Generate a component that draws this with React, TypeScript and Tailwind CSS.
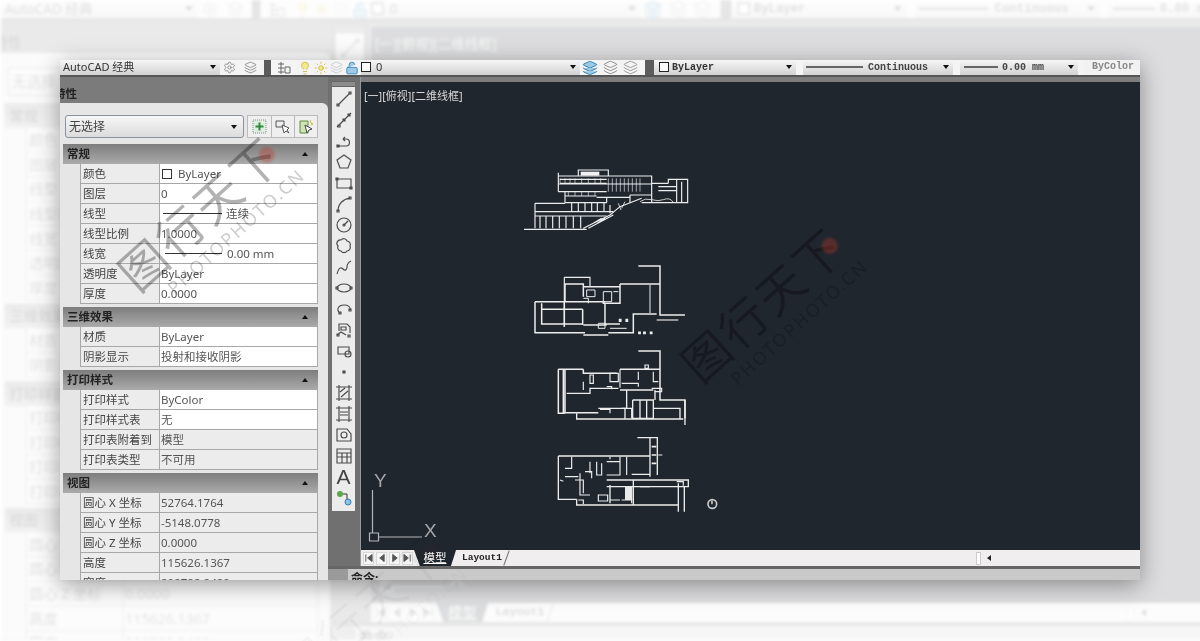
import React from "react";
import { Settings, Lightbulb, Sun, LockOpen, Layers } from "lucide-react";

const CJK = "font-['Noto_Sans','Noto_Sans_CJK_SC',sans-serif]";
const MONO = "font-['Liberation_Mono','Noto_Sans_CJK_SC',monospace]";

type Row = { label: string; value: string; line?: number; swatch?: boolean; gray?: boolean };
type Section = { title: string; rows: Row[] };

const sections: Section[] = [
  {
    title: "常规",
    rows: [
      { label: "颜色", value: "ByLayer", swatch: true },
      { label: "图层", value: "0" },
      { label: "线型", value: "连续", line: 59 },
      { label: "线型比例", value: "1.0000" },
      { label: "线宽", value: "0.00 mm", line: 57 },
      { label: "透明度", value: "ByLayer" },
      { label: "厚度", value: "0.0000" },
    ],
  },
  {
    title: "三维效果",
    rows: [
      { label: "材质", value: "ByLayer" },
      { label: "阴影显示", value: "投射和接收阴影" },
    ],
  },
  {
    title: "打印样式",
    rows: [
      { label: "打印样式", value: "ByColor" },
      { label: "打印样式表", value: "无" },
      { label: "打印表附着到", value: "模型", gray: true },
      { label: "打印表类型", value: "不可用", gray: true },
    ],
  },
  {
    title: "视图",
    rows: [
      { label: "圆心 X 坐标", value: "52764.1764", gray: true },
      { label: "圆心 Y 坐标", value: "-5148.0778", gray: true },
      { label: "圆心 Z 坐标", value: "0.0000", gray: true },
      { label: "高度", value: "115626.1367", gray: true },
      { label: "宽度", value: "202782.2429", gray: true },
    ],
  },
];

// left draw palette, one path per tool
const tools: React.ReactNode[] = [
  <path d="M3 15L15 3M2 14h2v2H2zM14 2h2v2h-2z" />,
  <path d="M2 16L16 2M3 14h2v2H3zM8 8h2v2H8zM13 3h2v2h-2z" />,
  <path d="M2 14h9a3.500 3.500 0 000-7H8M8 7l2-2M8 7l2 2M2 13h2v2H2z" />,
  <path d="M9 2l7 5-3 8H5L2 7z" />,
  <path d="M2 5h14v9H2zM1 4h2v2H1zM15 13h2v2h-2z" />,
  <path d="M3 16C3 9 8 4 15 3M2 15h2v2H2zM14 2h2v2h-2z" />,
  <><circle cx="9" cy="9" r="7" /><path d="M9 9l4-4" /><circle cx="9" cy="9" r="1" /></>,
  <path d="M6 3a3.500 3.500 0 016 1 3.500 3.500 0 013 5 3.500 3.500 0 01-3 5 3.500 3.500 0 01-6 0 3.500 3.500 0 01-3-5 3.500 3.500 0 013-6z" />,
  <path d="M2 16c2-7 4-7 6-5s4 1 4-2 2-5 4-6" />,
  <><ellipse cx="9" cy="9" rx="7" ry="4" /><path d="M1 8h2v2H1zM15 8h2v2h-2z" /></>,
  <path d="M5 13C1 10 3 5 9 5c4 0 7 2 6 5M4 12h2v2H4zM14 9h2v2h-2z" />,
  <path d="M4 10V3h8l3 3v6M2 14l4-3 5 3M2 13h2v2H2zM13 14h2v2h-2zM6 6h5v3H6z" />,
  <><path d="M3 5h11v7H3z" /><circle cx="13" cy="12" r="3" /></>,
  <path d="M8 8h2v2H8z" fill="#4a4a4a" />,
  <path d="M4 3h10v12H4zM1 3h16M1 15h16M4 1v16M14 1v16M5 8l5-4M6 13l7-6" />,
  <path d="M4 3h10v12H4zM1 3h16M1 15h16M4 1v16M14 1v16M5 7h8M5 10h8" />,
  <><path d="M2 3h10l4 5v7H2z" /><circle cx="9" cy="9" r="3" /></>,
  <path d="M2 2h14v14H2zM2 6h14M2 10h14M7 6v10M12 6v10" />,
];

const navButtons = ["M2 1v8M9 1L4 5l5 4z", "M8 1L3 5l5 4z", "M3 1l5 4-5 4z", "M8 1v8M1 1l5 4-5 4z"];

function GrayIcon({ children }: { children: React.ReactNode }) {
  return (
    <svg width="18" height="18" viewBox="0 0 18 18" fill="none" stroke="#4a4a4a" strokeWidth="1.150">
      {children}
    </svg>
  );
}

function Arrow() {
  return <span className="w-0 h-0 border-x-[3.5px] border-x-transparent border-t-[4px] border-t-[#111]" />;
}

function Combo({ className, children }: { className: string; children: React.ReactNode }) {
  return (
    <div className={`flex items-center h-full pb-[1px] bg-linear-to-b from-[#f6f6f6] to-[#d2d2d2] pr-[4px] ${className}`}>
      {children}
      <span className="ml-auto flex">
        <Arrow />
      </span>
    </div>
  );
}

function Toolbar() {
  return (
    <div className="flex h-[15px] bg-[#f4f4f4] shrink-0">
      <Combo className={`w-[160px] pl-[3px] text-[11px] text-[#333] ${CJK}`}>AutoCAD 经典</Combo>
      <div className="flex items-center w-[44px] pl-[3px] gap-[8px]">
        <Settings size={13} strokeWidth={1.2} color="#666" />
        <Layers size={13} strokeWidth={1.2} color="#666" />
      </div>
      <div className="w-[7px] bg-[#5c5c5c]" />
      <div className="flex items-center w-[26px] justify-center">
        <svg width="14" height="14" viewBox="0 0 14 14" fill="none" stroke="#666">
          <path d="M1 3h6M1 7h6M1 11h6M4 1v12M8 6h5v6H8z" />
        </svg>
      </div>
      <div className="flex items-center w-[64px] gap-[2px] pl-[1px]">
        <Lightbulb size={14} strokeWidth={1.3} color="#c9b52a" fill="#f3e98e" />
        <Sun size={14} strokeWidth={1.4} color="#c9b52a" fill="#f3e98e" />
        <Layers size={13} strokeWidth={1.2} color="#bbb" />
        <LockOpen size={14} strokeWidth={1.4} color="#2f7fb5" fill="#9cc9e4" />
      </div>
      <Combo className={`w-[219px] text-[11px] text-[#333] ${CJK}`}>
        <span className="w-[10px] h-[10px] border border-[#222] bg-white mr-[5px]" />0
      </Combo>
      <div className="flex items-center w-[65px] pl-[2px] gap-[5px]">
        <Layers size={16} strokeWidth={1.4} color="#2f7fb5" fill="#9cc9e4" />
        <Layers size={15} strokeWidth={1.1} color="#666" />
        <Layers size={15} strokeWidth={1.1} color="#777" />
      </div>
      <div className="w-[9px] bg-[#5c5c5c]" />
      <Combo className={`w-[142px] pl-[5px] text-[10px] font-bold text-[#333] ${MONO}`}>
        <span className="w-[10px] h-[10px] border border-[#222] bg-white mr-[3px]" />
        ByLayer
      </Combo>
      <div className="w-[7px]" />
      <Combo className={`w-[150px] pl-[3px] text-[10px] font-bold text-[#444] ${MONO}`}>
        <span className="w-[57px] h-[1.5px] bg-[#666] mr-[5px]" />
        Continuous
      </Combo>
      <div className="w-[7px]" />
      <Combo className={`w-[118px] pl-[4px] text-[10px] font-bold text-[#444] ${MONO}`}>
        <span className="w-[34px] h-[1.5px] bg-[#666] mr-[4px]" />
        0.00 mm
      </Combo>
      <div className="w-[6px]" />
      <div className={`flex-1 pl-[8px] bg-[#f2f2f2] text-[10px] leading-[13px] font-bold text-[#888] ${MONO}`}>ByColor</div>
    </div>
  );
}

function PropRow({ row }: { row: Row }) {
  return (
    <div className={`flex h-[20px] ml-[17px] text-[11.5px] leading-[19px] border-b border-[#a8a8a8] ${CJK}`}>
      <div className="w-[80px] pl-[2px] bg-[#ececec] border-x border-[#a8a8a8] text-[#444] whitespace-nowrap overflow-hidden">
        {row.label}
      </div>
      <div
        className={`flex flex-1 items-center pl-[1px] border-r border-[#a8a8a8] text-[#555] whitespace-nowrap ${
          row.gray ? "bg-[#ececec]" : "bg-white"
        }`}
      >
        {row.swatch && <span className="w-[10px] h-[10px] border border-[#333] ml-[1px] mr-[6px]" />}
        {row.line === 59 && <span className="w-[59px] h-px bg-[#333] ml-[2px] mr-[4px]" />}
        {row.line === 57 && <span className="w-[57px] h-px bg-[#333] ml-[4px] mr-[5px]" />}
        {row.value}
      </div>
    </div>
  );
}

function PropsPanel() {
  return (
    <div className="w-[268px] h-full flex flex-col shrink-0 bg-[#7b7b7b] overflow-hidden">
      <div className={`h-[26px] shrink-0 -ml-[6px] text-[11.5px] leading-[33px] text-[#222] font-bold ${CJK}`}>特性</div>
      <div className="flex-1 bg-[#e6e6e6] rounded-tr-[6px] pl-[3px] pr-[10px] pt-[12px]">
        <div className="flex gap-[3px] h-[23px] pl-[2px]">
          <div
            className={`flex items-center w-[180px] pl-[3px] pr-[6px] border border-[#8a93a0] rounded-[3px] bg-linear-to-b from-[#f7f7f7] to-[#dcdcdc] text-[12px] text-[#444] ${CJK}`}
          >
            无选择
            <span className="ml-auto flex">
              <Arrow />
            </span>
          </div>
          <div className="flex w-[71px] border border-[#bbb] bg-[#efefef] divide-x divide-[#bbb]">
            <span className="flex-1 flex items-center justify-center">
              <svg width="15" height="15" viewBox="0 0 15 15">
                <rect x="1" y="1" width="13" height="13" fill="#dfeee0" stroke="#8a8a8a" strokeDasharray="1 1" />
                <path d="M7.500 3.500v8M3.500 7.500h8" stroke="#2e8b3c" strokeWidth="2" />
              </svg>
            </span>
            <span className="flex-1 flex items-center justify-center">
              <svg width="16" height="16" viewBox="0 0 16 16" fill="none" stroke="#555">
                <path d="M1 2h8v6H1z" />
                <path d="M7 6l2 8 2-2 3 2-2-3 2-2z" fill="#fff" />
              </svg>
            </span>
            <span className="flex-1 flex items-center justify-center">
              <svg width="16" height="16" viewBox="0 0 16 16" fill="none">
                <path d="M2 2h8v12H2z" fill="#cfe3b4" stroke="#5c8a3a" />
                <path d="M7 6l2 8 2-3 3-1z" fill="#fff" stroke="#444" />
                <path d="M12 1l1 3 2 1-2 1" stroke="#d9b62a" />
              </svg>
            </span>
          </div>
        </div>
        <div className="flex flex-col gap-[3px] mt-[6px]">
          {sections.map((s) => (
            <div key={s.title}>
              <div
                className={`flex items-center h-[20px] pl-[4px] pr-[10px] bg-linear-to-b from-[#7d7d7d] to-[#ababab] text-[11.5px] font-bold text-[#222] ${CJK}`}
              >
                {s.title}
                <span className="ml-auto w-0 h-0 border-x-[3.5px] border-x-transparent border-b-[4px] border-b-[#111]" />
              </div>
              {s.rows.map((r) => (
                <PropRow key={r.label} row={r} />
              ))}
            </div>
          ))}
        </div>
      </div>
    </div>
  );
}

function Palette() {
  return (
    <div className="w-[23px] shrink-0 flex flex-col ml-[4px]">
      <div className="h-[6px] mt-[4px] bg-[#8d8d8d] border-y border-[#666]" />
      <div className="flex flex-col items-center bg-[#ececec] pt-[1px] pb-[3px]">
        {tools.map((t, i) => (
          <div key={i} className="h-[21px] flex items-center justify-center">
            <GrayIcon>{t}</GrayIcon>
          </div>
        ))}
        <div className="h-[22px] text-[21px] leading-[22px] text-[#444] font-['Liberation_Sans',sans-serif]">A</div>
        <svg width="18" height="20" viewBox="0 0 18 20">
          <circle cx="5" cy="6" r="3" fill="#5aa64a" />
          <circle cx="13" cy="14" r="3" fill="#8fc0e6" stroke="#2f7fb5" />
          <path d="M8 6h4v5" fill="none" stroke="#333" />
        </svg>
      </div>
    </div>
  );
}

function Drawing() {
  const bandGrid = [295, 307, 319, 331, 343, 355, 367, 379, 390];
  const cols = [90, 108, 128, 148, 168, 190, 212];
  const mids = [185, 205, 225, 245, 262, 282];
  return (
    <svg className="absolute inset-0" width="779" height="468" viewBox="361 82 779 468" fill="none" stroke="#eceded">
      <g transform="translate(510 160) scale(0.3333)" strokeWidth="3.500">
        {/* elevation */}
        <rect x="212" y="35" width="56" height="12" fill="#f2f2f2" stroke="none" />
        <path d="M145 38V95M145 48H425V128M205 48V30H295V48M150 58H290M150 70H290M145 72H425M145 95H290M165 95V128M165 108H260M165 128H290" />
        <path d="M260 112H360M290 112V128M75 130H165M75 130V205M75 155H310M75 168H290M300 135V160" />
        <path d="M220 205L300 165L330 140L395 115M235 205L310 165M42 208H230M250 190L275 175M262 190L285 175" />
        <path d="M360 105H425M360 105V128M445 80H500M445 92H500M500 60V128M515 65V128M475 70V58H533V128H395M425 70H475" />
        <path d="M390 125q15-12 35-6t35 0q20-8 30 8M325 130l8 20M345 125l-10 20" strokeWidth="2.500" />
        {bandGrid.map((x) => (
          <path key={x} d={`M${x} 55V95`} strokeWidth="2" />
        ))}
        {cols.map((x) => (
          <path key={x} d={`M${x} 168V205`} />
        ))}
        {mids.map((x) => (
          <path key={x} d={`M${x} 128V155`} />
        ))}
        <path d="M150 55v14M165 55v14M180 55v14M195 55v14M215 55v14M235 55v14M255 55v14M272 55v14M175 96v12M195 96v12M215 96v12M235 96v12M255 96v12" strokeWidth="2" />

        {/* plan 1 */}
        <path d="M385 318H450V465H525" strokeWidth="4.500" />
        <path d="M163 352H240V378M163 352V500" />
        <path d="M165 372H220V410M165 372V425M75 425H285M75 425V518H225M95 430V492H220M95 448H218M218 448V495M163 425V500" strokeWidth="4.500" />
        <path d="M330 372H450M330 372V430H280V425M220 380H330M285 430V492H330M220 495H290M220 525H295M295 518H370V462H440" strokeWidth="4.500" />
        <path d="M420 372V460M440 480H505" stroke="#b9bbbc" strokeWidth="4" />
        <path d="M230 390h25v20h-25zM280 395h25v30h-25zM310 395h15M220 415h15v15M265 490h20v15h-20zM300 505h50" strokeWidth="3" />
        <path d="M328 478h5v6h-5zM348 478h5v6h-5zM386 516h5v5h-5zM401 516h5v5h-5zM421 516h5v5h-5z" fill="#e9eaea" />
      </g>
      <g transform="translate(510 340) scale(0.3333)" strokeWidth="3.500">
        {/* plan 2 */}
        <path d="M385 33H450V180H525V235M145 88V220H165M160 88V218M145 88H220M165 88V218H265M220 88V100H320M330 88H450" strokeWidth="4.500" />
        <path d="M170 160H240V145H325M330 150H430M350 150V205H265M200 220V237H520M345 205V235M368 180V235H430V180H368M390 180V235M410 180V235M430 205H510V237M525 180V255M435 150V180" strokeWidth="4" />
        <path d="M240 105v25h10v-25zM300 100h25v25h-25zM330 88v55M405 75h10v10h-10zM385 95v25M430 95v30h15M220 125v25M335 130h50v10M425 145h30v10h-20M270 208h30v12M335 205h30v30M290 140h15v8" strokeWidth="3.500" />

        {/* plan 3 */}
        <path d="M382 293H442V405M420 295V410M145 348H420M145 348V478H200M200 478V495H505M505 430V515M523 440V515M290 420H535V440H290M370 420V495M300 435V490M365 403H420" strokeWidth="4" />
        <rect x="345" y="440" width="22" height="40" fill="#e9eaea" stroke="none" />
        <path d="M210 400V465H240M240 365v35M260 365v40h15v-35M185 350v35h-20M165 410h40M195 420h25v40M290 365h40v40h-40M330 350v55M350 350v55M300 480h30M335 480h30v10M265 465h28v18h-28zM205 480h15v12M150 420l10 4M225 395h20v20M300 350v8M445 345h12M500 425h20v12M390 440h30" strokeWidth="3.500" />
        <path d="M425 320h14M425 345h14M425 370h14" strokeWidth="5" />
        <circle cx="607" cy="492" r="13" stroke="#c8cacb" strokeWidth="5" />
        <path d="M606 482v11" stroke="#e9eaea" strokeWidth="4" />
      </g>
      {/* ucs icon */}
      <g stroke="#b4b6b8" strokeWidth="1.200">
        <path d="M372.500 490V533M379 537H422M369.500 533h9v8h-9z" />
      </g>
      <text x="374" y="487" fontSize="19" fill="#a4a6a9" stroke="none" fontFamily="Liberation Sans, sans-serif">Y</text>
      <text x="424" y="537" fontSize="19" fill="#a4a6a9" stroke="none" fontFamily="Liberation Sans, sans-serif">X</text>
    </svg>
  );
}

function TabBar() {
  return (
    <div className="flex items-center h-[16px] bg-[#f0eeef] shrink-0">
      <div className="flex items-center w-[53px] h-full pl-[2px] gap-[2px]">
        {navButtons.map((d) => (
          <span key={d} className="flex items-center justify-center w-[11px] h-[13px] border border-[#d8d8d8] bg-[#f7f7f7]">
            <svg width="10" height="10" viewBox="0 0 10 10" fill="#555" stroke="#555">
              <path d={d} />
            </svg>
          </span>
        ))}
      </div>
      <div
        className={`w-[42px] h-full text-center bg-[#20262e] text-white text-[11.5px] leading-[16px] underline [clip-path:polygon(0_0,100%_0,88%_100%,14%_100%)] ${CJK}`}
      >
        模型
      </div>
      <div className={`ml-[6px] text-[9.5px] font-bold text-[#222] ${MONO}`}>Layout1</div>
      <div className="ml-[4px] w-px h-[16px] bg-[#777] rotate-[20deg]" />
      <div className="flex-1" />
      <div className="flex items-center w-[164px] h-full">
        <span className="w-[5px] h-[13px] border border-[#ccc] bg-white" />
        <span className="ml-[6px] w-0 h-0 border-y-[3.5px] border-y-transparent border-r-[4px] border-r-[#222]" />
      </div>
    </div>
  );
}

function Watermark({ className }: { className: string }) {
  return (
    <div className={`absolute w-[220px] h-[90px] -rotate-[42deg] flex flex-col items-center pointer-events-none ${className}`}>
      <div className={`text-[47px] leading-[54px] font-normal tracking-[3px] whitespace-nowrap text-black/30 ${CJK}`}>图行天下</div>
      <div className={`text-[18px] leading-[20px] tracking-[2px] whitespace-nowrap text-black/20 ml-[30px] ${CJK}`}>
        PHOTOPHOTO.CN
      </div>
      <div className="absolute left-[191px] top-[20px] w-[16px] h-[16px] rounded-full bg-[#c0392b]/35 blur-[1px]" />
    </div>
  );
}

function CadWindow() {
  return (
    <div className="relative flex flex-col w-[1080px] h-[520px] overflow-hidden bg-[#787878]">
      <Toolbar />
      <div className="h-[2px] bg-[#555] shrink-0" />
      <div className="flex flex-1 min-h-0">
        <PropsPanel />
        <div className="flex flex-col flex-1 min-w-0">
          <div className="flex flex-1 min-h-0 bg-[#707070]">
            <Palette />
            <div className="flex flex-col flex-1 ml-[5px] border-l border-[#999] pt-[5px] bg-[#7e7e7e]">
              <div className="relative flex-1 bg-[#20262e]">
                <div className={`absolute left-[3px] top-[8px] text-[11px] leading-none text-[#d8d8d8] ${CJK}`}>[一][俯视][二维线框]</div>
                <Drawing />
              </div>
              <TabBar />
            </div>
          </div>
          <div className="h-[3px] bg-[#666] shrink-0" />
          <div className="flex h-[11px] shrink-0 bg-[#c9c9c9] items-start overflow-hidden">
            <div className="w-[20px] h-full bg-[#9a9a9a] mr-[3px]" />
            <div className={`mt-[3px] text-[12px] leading-[14px] font-bold text-[#222] ${CJK}`}>命令:</div>
          </div>
        </div>
      </div>
      <Watermark className="left-[42px] top-[122px]" />
      <Watermark className="left-[605px] top-[213px]" />
    </div>
  );
}

export default function App() {
  return (
    <div className="relative w-[1200px] h-[641px] overflow-hidden bg-white pl-[60px] pt-[60px]">
      {/* enlarged faded copy behind the main window */}
      <div className="absolute left-[1px] top-0 origin-top-left scale-[1.23] opacity-15 blur-[1.5px]">
        <CadWindow />
      </div>
      <div className="relative shadow-[0_5px_22px_rgba(0,0,0,0.38)] w-[1080px] blur-[0.35px]">
        <CadWindow />
      </div>
      <Watermark className="left-[265px] top-[580px] opacity-10" />
    </div>
  );
}
